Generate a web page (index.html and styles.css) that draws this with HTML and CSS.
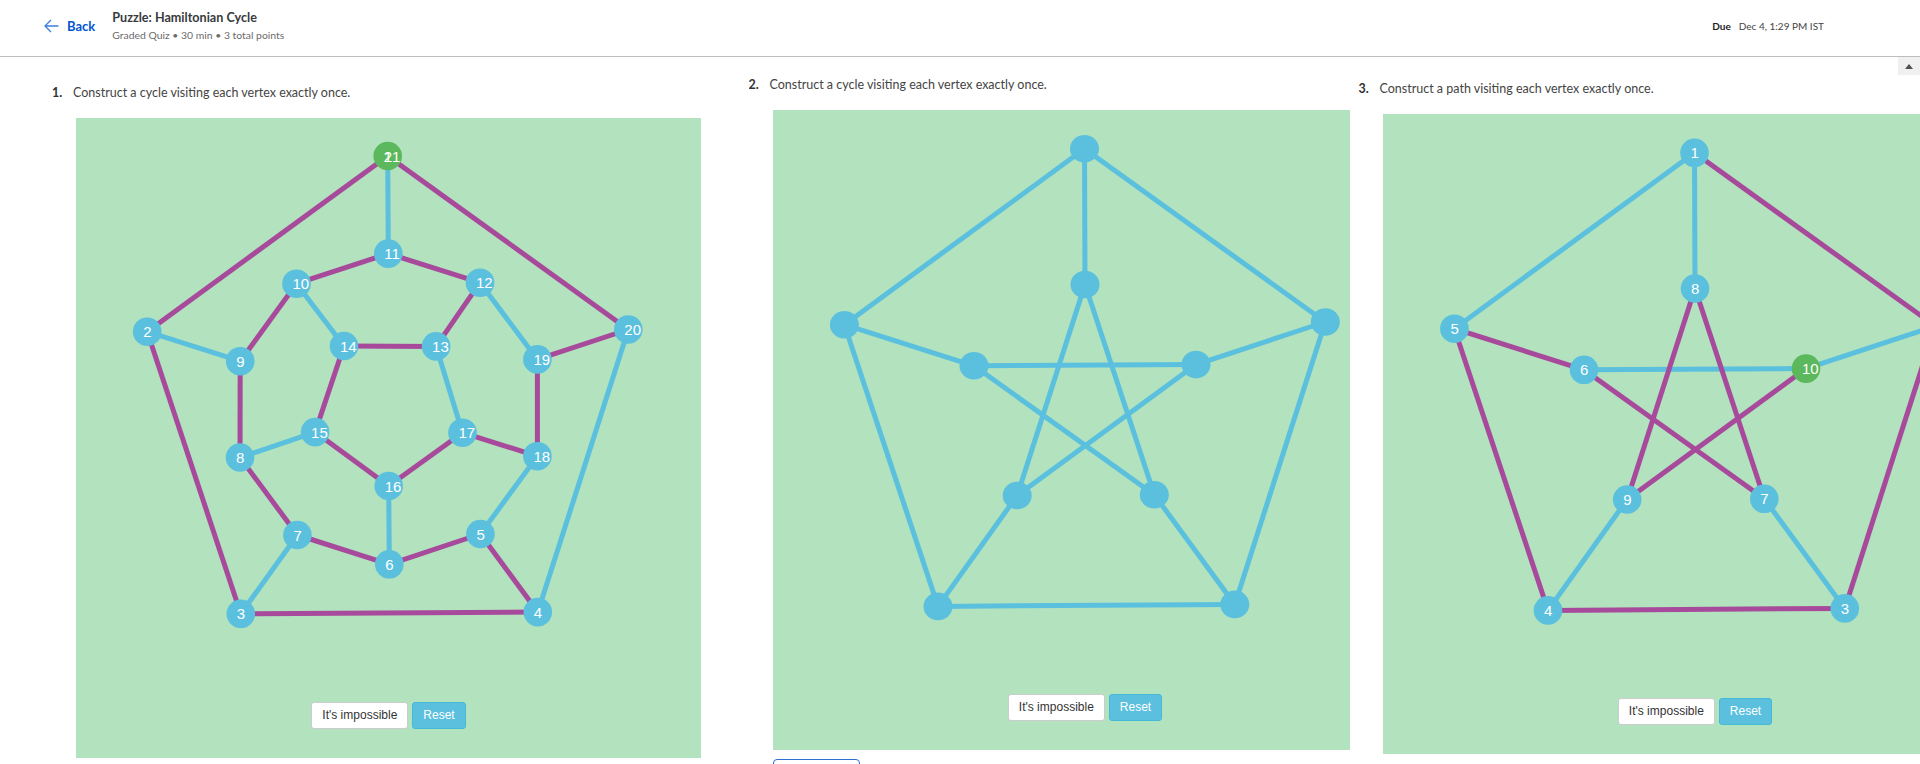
FILE: index.html
```html
<!DOCTYPE html>
<html lang="en">
<head>
<meta charset="utf-8">
<title>Puzzle: Hamiltonian Cycle</title>
<link rel="stylesheet" href="styles.css">
</head>
<body>
<header class="topbar">
  <a class="back" href="#">
    <svg class="back-icon" width="15" height="14" viewBox="0 0 15 14"><path d="M14.5 7H1 M7 1L1 7l6 6" fill="none" stroke="#3b7fe0" stroke-width="1.3"/></svg>
    <span>Back</span>
  </a>
  <div class="title-block">
    <div class="title">Puzzle: Hamiltonian Cycle</div>
    <div class="meta">Graded Quiz • 30 min • 3 total points</div>
  </div>
  <div class="due"><b>Due</b><span>Dec 4, 1:29 PM IST</span></div>
</header>
<div class="scroll-up"><span class="scroll-tri"></span></div>

<main class="questions">
  <section class="q q-1">
    <div class="q-head"><span class="q-num">1.</span><span class="q-text">Construct a cycle visiting each vertex exactly once.</span></div>
    <div class="graph">
      <svg class="graph-svg" width="625" height="584" viewBox="0 0 625 584">
        <g class="edges">
          <line class="edge edge-blue" x1="311.7" y1="38" x2="312.3" y2="135.6"/>
          <line class="edge edge-blue" x1="220.5" y1="165.7" x2="268" y2="228"/>
          <line class="edge edge-blue" x1="404" y1="164.7" x2="461.4" y2="241.4"/>
          <line class="edge edge-blue" x1="71.2" y1="213.7" x2="164.2" y2="243.2"/>
          <line class="edge edge-blue" x1="552.3" y1="211.5" x2="461.8" y2="494.1"/>
          <line class="edge edge-blue" x1="360.1" y1="228.4" x2="386.5" y2="314.7"/>
          <line class="edge edge-blue" x1="239.1" y1="314.1" x2="164" y2="339.5"/>
          <line class="edge edge-blue" x1="461.4" y1="338.2" x2="404.4" y2="416"/>
          <line class="edge edge-blue" x1="312.7" y1="368" x2="313.3" y2="446.3"/>
          <line class="edge edge-blue" x1="221.4" y1="417" x2="164.8" y2="495.8"/>
          <line class="edge edge-path" x1="311.7" y1="38" x2="71.2" y2="213.7"/>
          <line class="edge edge-path" x1="71.2" y1="213.7" x2="164.8" y2="495.8"/>
          <line class="edge edge-path" x1="164.8" y1="495.8" x2="461.8" y2="494.1"/>
          <line class="edge edge-path" x1="461.8" y1="494.1" x2="404.4" y2="416"/>
          <line class="edge edge-path" x1="404.4" y1="416" x2="313.3" y2="446.3"/>
          <line class="edge edge-path" x1="313.3" y1="446.3" x2="221.4" y2="417"/>
          <line class="edge edge-path" x1="221.4" y1="417" x2="164" y2="339.5"/>
          <line class="edge edge-path" x1="164" y1="339.5" x2="164.2" y2="243.2"/>
          <line class="edge edge-path" x1="164.2" y1="243.2" x2="220.5" y2="165.7"/>
          <line class="edge edge-path" x1="220.5" y1="165.7" x2="312.3" y2="135.6"/>
          <line class="edge edge-path" x1="312.3" y1="135.6" x2="404" y2="164.7"/>
          <line class="edge edge-path" x1="404" y1="164.7" x2="360.1" y2="228.4"/>
          <line class="edge edge-path" x1="360.1" y1="228.4" x2="268" y2="228"/>
          <line class="edge edge-path" x1="268" y1="228" x2="239.1" y2="314.1"/>
          <line class="edge edge-path" x1="239.1" y1="314.1" x2="312.7" y2="368"/>
          <line class="edge edge-path" x1="312.7" y1="368" x2="386.5" y2="314.7"/>
          <line class="edge edge-path" x1="386.5" y1="314.7" x2="461.4" y2="338.2"/>
          <line class="edge edge-path" x1="461.4" y1="338.2" x2="461.4" y2="241.4"/>
          <line class="edge edge-path" x1="461.4" y1="241.4" x2="552.3" y2="211.5"/>
          <line class="edge edge-path" x1="552.3" y1="211.5" x2="311.7" y2="38"/>
        </g>
        <g class="nodes">
          <circle class="node node-start" cx="311.7" cy="38" r="14.3"/>
          <circle class="node" cx="312.3" cy="135.6" r="14.3"/>
          <circle class="node" cx="220.5" cy="165.7" r="14.3"/>
          <circle class="node" cx="404" cy="164.7" r="14.3"/>
          <circle class="node" cx="71.2" cy="213.7" r="14.3"/>
          <circle class="node" cx="552.3" cy="211.5" r="14.3"/>
          <circle class="node" cx="164.2" cy="243.2" r="14.3"/>
          <circle class="node" cx="268" cy="228" r="14.3"/>
          <circle class="node" cx="360.1" cy="228.4" r="14.3"/>
          <circle class="node" cx="461.4" cy="241.4" r="14.3"/>
          <circle class="node" cx="239.1" cy="314.1" r="14.3"/>
          <circle class="node" cx="386.5" cy="314.7" r="14.3"/>
          <circle class="node" cx="164" cy="339.5" r="14.3"/>
          <circle class="node" cx="461.4" cy="338.2" r="14.3"/>
          <circle class="node" cx="312.7" cy="368" r="14.3"/>
          <circle class="node" cx="221.4" cy="417" r="14.3"/>
          <circle class="node" cx="404.4" cy="416" r="14.3"/>
          <circle class="node" cx="313.3" cy="446.3" r="14.3"/>
          <circle class="node" cx="164.8" cy="495.8" r="14.3"/>
          <circle class="node" cx="461.8" cy="494.1" r="14.3"/>
        </g>
        <g class="labels">
          <text class="label" x="307.7" y="43.5">1</text>
          <text class="label" x="307.7" y="43.5">21</text>
          <text class="label" x="308.3" y="141.1">11</text>
          <text class="label" x="216.5" y="171.2">10</text>
          <text class="label" x="400" y="170.2">12</text>
          <text class="label" x="67.2" y="219.2">2</text>
          <text class="label" x="548.3" y="217">20</text>
          <text class="label" x="160.2" y="248.7">9</text>
          <text class="label" x="264" y="233.5">14</text>
          <text class="label" x="356.1" y="233.9">13</text>
          <text class="label" x="457.4" y="246.9">19</text>
          <text class="label" x="235.1" y="319.6">15</text>
          <text class="label" x="382.5" y="320.2">17</text>
          <text class="label" x="160" y="345">8</text>
          <text class="label" x="457.4" y="343.7">18</text>
          <text class="label" x="308.7" y="373.5">16</text>
          <text class="label" x="217.4" y="422.5">7</text>
          <text class="label" x="400.4" y="421.5">5</text>
          <text class="label" x="309.3" y="451.8">6</text>
          <text class="label" x="160.8" y="501.3">3</text>
          <text class="label" x="457.8" y="499.6">4</text>
        </g>
      </svg>
      <div class="graph-actions">
        <button class="btn btn-default">It's impossible</button>
        <button class="btn btn-info">Reset</button>
      </div>
    </div>
  </section>

  <section class="q q-2">
    <div class="q-head"><span class="q-num">2.</span><span class="q-text">Construct a cycle visiting each vertex exactly once.</span></div>
    <div class="graph">
      <svg class="graph-svg" width="625" height="584" viewBox="0 0 625 584">
        <g class="edges">
          <line class="edge edge-blue" x1="311.5" y1="38.8" x2="71.4" y2="214.7"/>
          <line class="edge edge-blue" x1="311.5" y1="38.8" x2="552.3" y2="212"/>
          <line class="edge edge-blue" x1="71.4" y1="214.7" x2="165" y2="496.4"/>
          <line class="edge edge-blue" x1="552.3" y1="212" x2="461.8" y2="494.4"/>
          <line class="edge edge-blue" x1="165" y1="496.4" x2="461.8" y2="494.4"/>
          <line class="edge edge-blue" x1="311.5" y1="38.8" x2="312" y2="174.5"/>
          <line class="edge edge-blue" x1="71.4" y1="214.7" x2="201" y2="255.8"/>
          <line class="edge edge-blue" x1="552.3" y1="212" x2="423" y2="254.6"/>
          <line class="edge edge-blue" x1="165" y1="496.4" x2="244.2" y2="385.5"/>
          <line class="edge edge-blue" x1="461.8" y1="494.4" x2="381.3" y2="384.8"/>
          <line class="edge edge-blue" x1="312" y1="174.5" x2="244.2" y2="385.5"/>
          <line class="edge edge-blue" x1="312" y1="174.5" x2="381.3" y2="384.8"/>
          <line class="edge edge-blue" x1="201" y1="255.8" x2="423" y2="254.6"/>
          <line class="edge edge-blue" x1="201" y1="255.8" x2="381.3" y2="384.8"/>
          <line class="edge edge-blue" x1="423" y1="254.6" x2="244.2" y2="385.5"/>
        </g>
        <g class="nodes">
          <ellipse class="node" cx="311.5" cy="38.8" rx="14.5" ry="13.8"/>
          <ellipse class="node" cx="312" cy="174.5" rx="14.5" ry="13.8"/>
          <ellipse class="node" cx="71.4" cy="214.7" rx="14.5" ry="13.8"/>
          <ellipse class="node" cx="552.3" cy="212" rx="14.5" ry="13.8"/>
          <ellipse class="node" cx="201" cy="255.8" rx="14.5" ry="13.8"/>
          <ellipse class="node" cx="423" cy="254.6" rx="14.5" ry="13.8"/>
          <ellipse class="node" cx="244.2" cy="385.5" rx="14.5" ry="13.8"/>
          <ellipse class="node" cx="381.3" cy="384.8" rx="14.5" ry="13.8"/>
          <ellipse class="node" cx="165" cy="496.4" rx="14.5" ry="13.8"/>
          <ellipse class="node" cx="461.8" cy="494.4" rx="14.5" ry="13.8"/>
        </g>
      </svg>
      <div class="graph-actions">
        <button class="btn btn-default">It's impossible</button>
        <button class="btn btn-info">Reset</button>
      </div>
    </div>
    <button class="btn-outline"></button>
  </section>

  <section class="q q-3">
    <div class="q-head"><span class="q-num">3.</span><span class="q-text">Construct a path visiting each vertex exactly once.</span></div>
    <div class="graph">
      <svg class="graph-svg" width="625" height="584" viewBox="0 0 625 584">
        <g class="edges">
          <line class="edge edge-blue" x1="311.5" y1="38.8" x2="71.4" y2="214.7"/>
          <line class="edge edge-blue" x1="311.5" y1="38.8" x2="312" y2="174.5"/>
          <line class="edge edge-blue" x1="201" y1="255.8" x2="423" y2="254.6"/>
          <line class="edge edge-blue" x1="423" y1="254.6" x2="552.3" y2="212"/>
          <line class="edge edge-blue" x1="244.2" y1="385.5" x2="165" y2="496.4"/>
          <line class="edge edge-blue" x1="381.3" y1="384.8" x2="461.8" y2="494.4"/>
          <line class="edge edge-path" x1="423" y1="254.6" x2="244.2" y2="385.5"/>
          <line class="edge edge-path" x1="244.2" y1="385.5" x2="312" y2="174.5"/>
          <line class="edge edge-path" x1="312" y1="174.5" x2="381.3" y2="384.8"/>
          <line class="edge edge-path" x1="381.3" y1="384.8" x2="201" y2="255.8"/>
          <line class="edge edge-path" x1="201" y1="255.8" x2="71.4" y2="214.7"/>
          <line class="edge edge-path" x1="71.4" y1="214.7" x2="165" y2="496.4"/>
          <line class="edge edge-path" x1="165" y1="496.4" x2="461.8" y2="494.4"/>
          <line class="edge edge-path" x1="461.8" y1="494.4" x2="552.3" y2="212"/>
          <line class="edge edge-path" x1="552.3" y1="212" x2="311.5" y2="38.8"/>
        </g>
        <g class="nodes">
          <circle class="node" cx="311.5" cy="38.8" r="14.3"/>
          <circle class="node" cx="312" cy="174.5" r="14.3"/>
          <circle class="node" cx="71.4" cy="214.7" r="14.3"/>
          <circle class="node" cx="552.3" cy="212" r="14.3"/>
          <circle class="node" cx="201" cy="255.8" r="14.3"/>
          <circle class="node node-start" cx="423" cy="254.6" r="14.3"/>
          <circle class="node" cx="244.2" cy="385.5" r="14.3"/>
          <circle class="node" cx="381.3" cy="384.8" r="14.3"/>
          <circle class="node" cx="165" cy="496.4" r="14.3"/>
          <circle class="node" cx="461.8" cy="494.4" r="14.3"/>
        </g>
        <g class="labels">
          <text class="label" x="307.5" y="44.3">1</text>
          <text class="label" x="308" y="180">8</text>
          <text class="label" x="67.4" y="220.2">5</text>
          <text class="label" x="548.3" y="217.5">2</text>
          <text class="label" x="197" y="261.3">6</text>
          <text class="label" x="419" y="260.1">10</text>
          <text class="label" x="240.2" y="391">9</text>
          <text class="label" x="377.3" y="390.3">7</text>
          <text class="label" x="161" y="501.9">4</text>
          <text class="label" x="457.8" y="499.9">3</text>
        </g>
      </svg>
      <div class="graph-actions">
        <button class="btn btn-default">It's impossible</button>
        <button class="btn btn-info">Reset</button>
      </div>
    </div>
  </section>
</main>
</body>
</html>
```

FILE: styles.css
```css
html, body {
  margin: 0;
  padding: 0;
  width: 1920px;
  height: 764px;
  overflow: hidden;
  background: #ffffff;
  font-family: "Lato", "Noto Sans", sans-serif;
  color: #333333;
}

.topbar {
  position: relative;
  display: flex;
  align-items: flex-start;
  height: 56px;
  padding: 0 96px 0 44px;
  border-bottom: 1px solid #bdbdbd;
  box-sizing: content-box;
}

.back {
  display: flex;
  align-items: center;
  gap: 8px;
  margin-top: 18px;
  height: 16px;
  color: #0056d2;
  font-size: 13px;
  font-weight: 700;
  text-decoration: none;
}

.back-icon {
  display: block;
}

.title-block {
  margin-left: 17px;
  padding-top: 9px;
}

.title {
  font-size: 12.6px;
  font-weight: 700;
  line-height: 17px;
  color: #373a3c;
}

.meta {
  margin-top: 2px;
  font-size: 10.4px;
  line-height: 15px;
  color: #6b6b6b;
}

.due {
  margin-left: auto;
  margin-top: 18px;
  font-size: 10px;
  line-height: 16px;
  color: #444444;
  display: flex;
  gap: 8px;
}

.due b {
  color: #222222;
  font-weight: 700;
}

.scroll-up {
  position: absolute;
  top: 57px;
  right: 0;
  width: 22px;
  height: 18px;
  background: #f0f0f0;
  display: flex;
  align-items: center;
  justify-content: center;
}

.scroll-tri {
  width: 0;
  height: 0;
  border-left: 4.5px solid transparent;
  border-right: 4.5px solid transparent;
  border-bottom: 5px solid #505050;
}

.questions {
  display: flex;
  align-items: flex-start;
  padding-left: 52px;
  width: 1920px;
  box-sizing: border-box;
}

.q {
  flex: none;
}

.q-1 {
  width: 696.5px;
  margin-top: 28px;
}

.q-2 {
  width: 601px;
  margin-top: 20px;
  margin-right: 9px;
  overflow: hidden;
}

.q-3 {
  width: 700px;
  margin-top: 24px;
}

.q-head {
  display: flex;
  font-size: 12.5px;
  line-height: 16px;
  color: #444444;
  white-space: nowrap;
}

.q-num {
  width: 21px;
  font-weight: 700;
  color: #333333;
}

.graph {
  margin-top: 17px;
  margin-left: 24px;
  width: 625px;
  height: 640px;
  background: #b2e2be;
  display: flex;
  flex-direction: column;
  align-items: center;
}

.graph-svg {
  display: block;
  flex: none;
}

.edge {
  stroke-width: 5;
}

.edge-blue {
  stroke: #5bc0de;
}

.edge-path {
  stroke: #a84a9b;
}

.node {
  fill: #5bc0de;
}

.node-start {
  fill: #5cb85c;
}

.label {
  fill: #ffffff;
  font-family: "Liberation Sans", Arial, sans-serif;
  font-size: 15px;
}

.graph-actions {
  display: flex;
  gap: 4px;
}

.btn {
  height: 27px;
  padding: 0 10px;
  font-family: "Liberation Sans", Arial, sans-serif;
  font-size: 12px;
  line-height: 25px;
  border-radius: 3px;
  border: 1px solid #cccccc;
  box-sizing: border-box;
  cursor: pointer;
}

.btn-default {
  background: #ffffff;
  color: #333333;
}

.btn-info {
  background: #5bc0de;
  border-color: #46b8da;
  color: #ffffff;
}

.btn-outline {
  display: block;
  margin-top: 9px;
  margin-left: 24px;
  width: 87px;
  height: 32px;
  background: #ffffff;
  border: 1px solid #2f6fd6;
  border-radius: 4px;
}
```
